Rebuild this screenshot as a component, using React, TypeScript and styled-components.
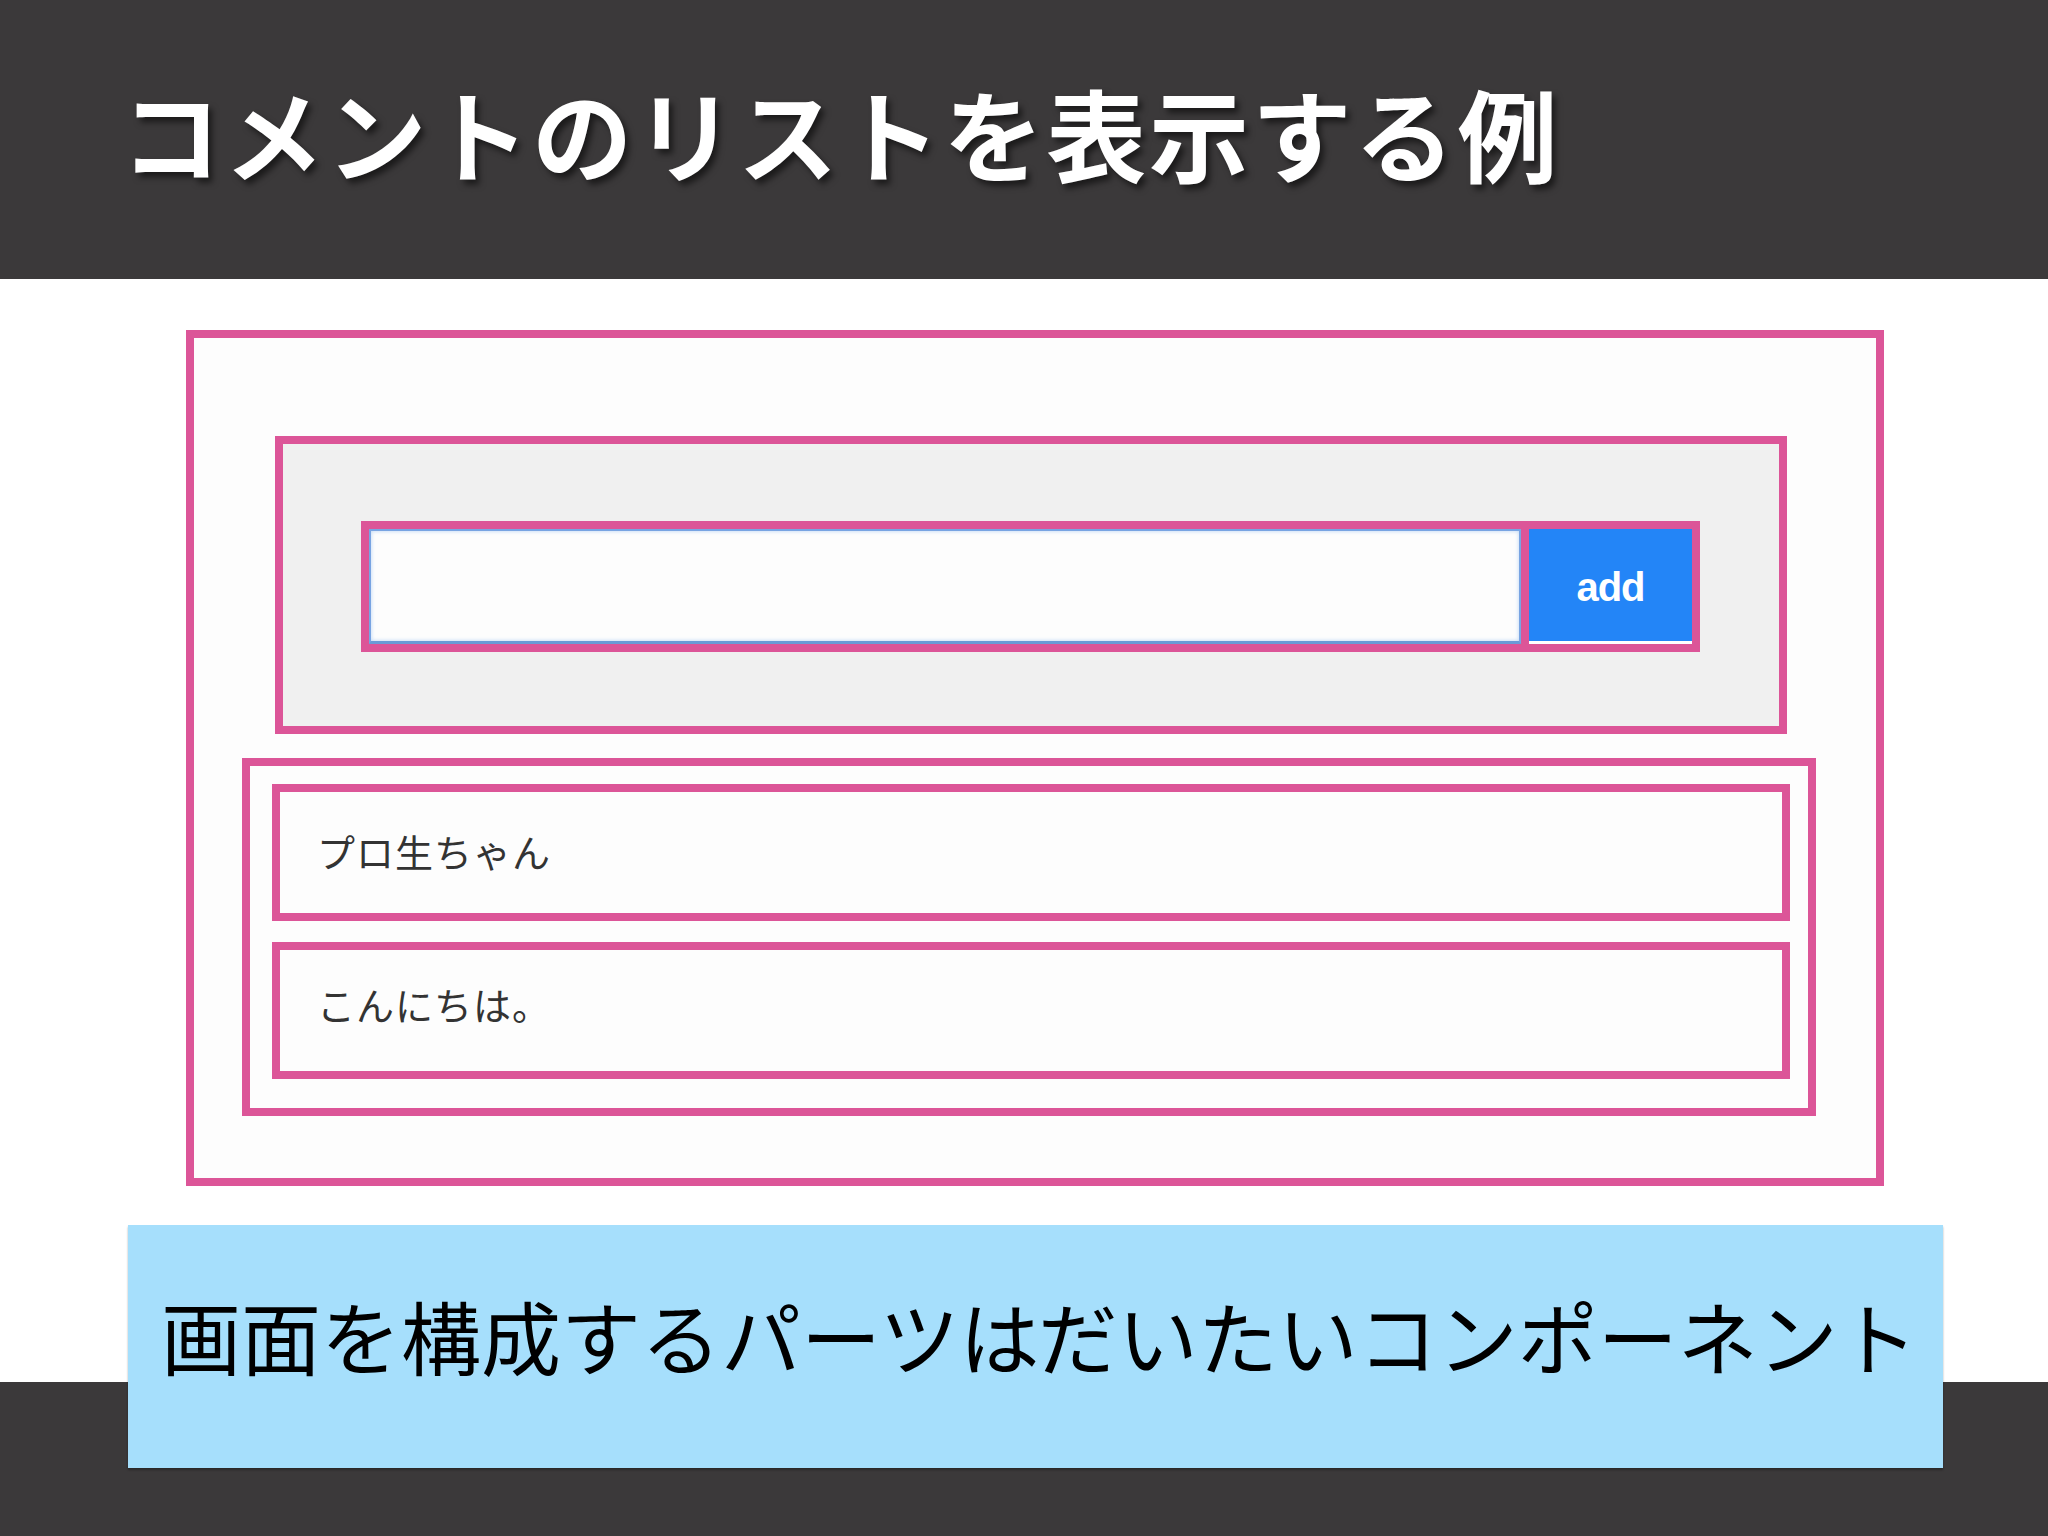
import React from "react";
import styled, { createGlobalStyle } from "styled-components";

const dark = "#3b393a";
const pink = "#dc5598";

const GlobalStyle = createGlobalStyle`
  html, body {
    margin: 0;
    padding: 0;
    background: #fff;
  }
  * {
    box-sizing: border-box;
  }
`;

const Slide = styled.div`
  width: 2048px;
  height: 1536px;
  display: flex;
  flex-direction: column;
  overflow: hidden;
  font-family: "Noto Sans CJK JP", "Noto Sans", sans-serif;
`;

const Header = styled.header`
  height: 279px;
  background: ${dark};
  display: flex;
  align-items: center;
  padding: 0 0 16px 121px;
`;

const Title = styled.h1`
  margin: 0;
  color: #fff;
  font-size: 100px;
  font-weight: 700;
  line-height: 1;
  letter-spacing: 2.8px;
  text-shadow: 4px 5px 6px rgba(0, 0, 0, 0.55);
`;

const Main = styled.main`
  background: #fff;
  padding: 51px 0 0 186px;
`;

const AppBox = styled.div`
  width: 1698px;
  border: 8px solid ${pink};
  background: #fdfdfd;
  padding: 98px 0 62px;
`;

const Form = styled.form`
  margin: 0 89px 0 81px;
  border: 8px solid ${pink};
  background: #f0f0f0;
  padding: 77px 79px 74px 78px;
  display: flex;
`;

const InputFrame = styled.div`
  flex: 1;
  height: 131px;
  border: 8px solid ${pink};
  display: flex;
`;

const TextInput = styled.input`
  flex: 1;
  margin: 0;
  border: 2px solid #78a4e2;
  border-bottom-width: 3px;
  border-bottom-color: #6a9bd6;
  background: #fdfdfd;
  box-shadow: inset 0 0 4px #b7d3f5;
  outline: none;
  font-size: 36px;
`;

const ButtonFrame = styled.div`
  width: 171px;
  height: 131px;
  border: 8px solid ${pink};
  border-left: 0;
  display: flex;
`;

const AddButton = styled.button`
  flex: 1;
  margin: 0;
  border: 0;
  border-bottom: 3px solid #fff;
  background: #2385f7;
  color: #fff;
  font-family: "Liberation Sans", Arial, sans-serif;
  font-size: 40px;
  font-weight: 700;
  letter-spacing: -1px;
  padding: 4px 0 0;
  cursor: pointer;
`;

const CommentList = styled.ul`
  list-style: none;
  margin: 24px 60px 0 48px;
  border: 8px solid ${pink};
  padding: 18px 18px 29px 22px;
  display: flex;
  flex-direction: column;
  gap: 21px;
`;

const CommentItem = styled.li<{ $lift: number }>`
  height: 137px;
  border: 8px solid ${pink};
  background: #fdfdfd;
  display: flex;
  align-items: center;
  padding: 0 0 ${(p) => p.$lift}px 37px;
  color: #333;
  font-size: 38px;
  letter-spacing: 1px;
`;

const CaptionBand = styled.section`
  flex: 1;
  background: linear-gradient(to bottom, #fff 0 196px, ${dark} 196px);
  padding: 39px 0 0 128px;
`;

const Caption = styled.div`
  width: 1815px;
  height: 243px;
  background: #a6dffc;
  box-shadow: 0 2px 2px rgba(0, 0, 0, 0.3);
  display: flex;
  align-items: center;
  padding: 0 0 26px 33px;
  color: #000;
  font-size: 80px;
  font-weight: 400;
  line-height: 1;
  white-space: nowrap;
`;

const comments = [
  { text: "プロ生ちゃん", lift: 4 },
  { text: "こんにちは。", lift: 14 },
];

export default function App() {
  return (
    <>
      <GlobalStyle />
      <Slide>
        <Header>
          <Title>コメントのリストを表示する例</Title>
        </Header>
        <Main>
          <AppBox>
            <Form onSubmit={(e) => e.preventDefault()}>
              <InputFrame>
                <TextInput type="text" />
              </InputFrame>
              <ButtonFrame>
                <AddButton type="submit">add</AddButton>
              </ButtonFrame>
            </Form>
            <CommentList>
              {comments.map((c) => (
                <CommentItem key={c.text} $lift={c.lift}>
                  {c.text}
                </CommentItem>
              ))}
            </CommentList>
          </AppBox>
        </Main>
        <CaptionBand>
          <Caption>画面を構成するパーツはだいたいコンポーネント</Caption>
        </CaptionBand>
      </Slide>
    </>
  );
}
